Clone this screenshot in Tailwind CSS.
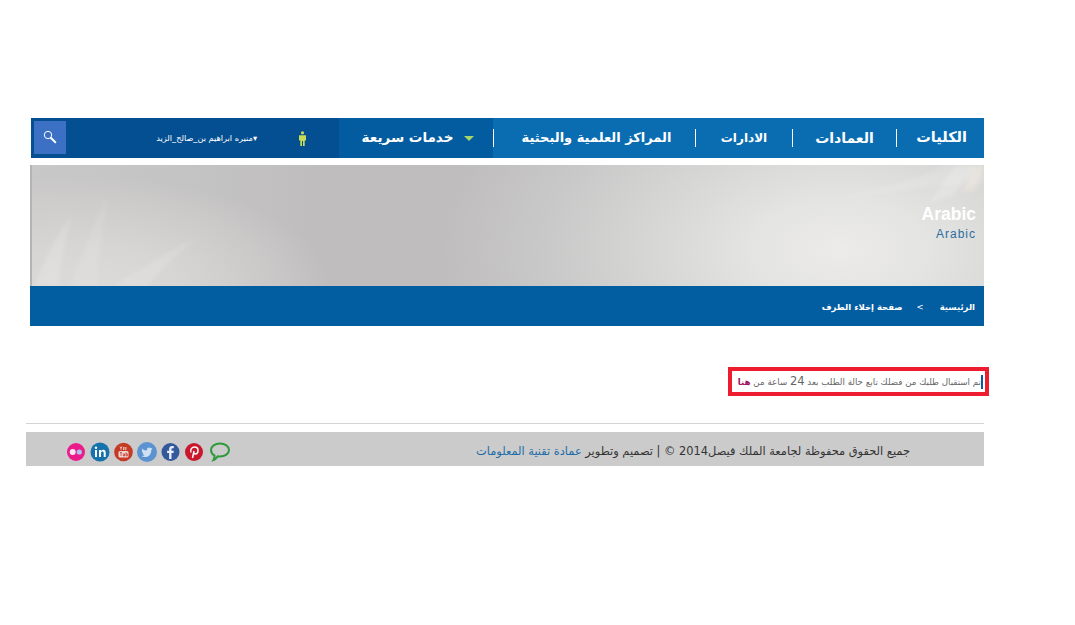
<!DOCTYPE html>
<html lang="ar">
<head>
<meta charset="utf-8">
<script src="https://cdn.jsdelivr.net/npm/@tailwindcss/browser@4"></script>
</head>
<body class="bg-white font-['DejaVu_Sans',sans-serif] w-[1075px] h-[625px] overflow-hidden">
<div class="pt-[118px] w-[1075px]">
  <!-- nav -->
  <nav class="ml-[31px] w-[953px] h-[40px] flex items-stretch bg-[#0a6db2]" dir="ltr">
    <div class="w-[308px] flex items-center bg-[#034f92] pl-[3px]">
      <div class="w-[32px] h-[33px] mb-[2px] bg-[#3b70c4] flex items-center justify-center">
        <svg width="14" height="14" viewBox="0 0 14 14" fill="none"><circle cx="5" cy="5" r="3.700" stroke="#fff" stroke-width="1"/><path d="M8 8L12.300 12.300" stroke="#fff" stroke-width="2" stroke-linecap="round"/></svg>
      </div>
      <div class="w-[192px] ml-[-1px] flex justify-end">
        <span dir="rtl" class="text-[8.200px] text-white whitespace-nowrap">▾منيره ابراهيم بن_صالح_الزيد</span>
      </div>
      <div class="ml-[39px] w-[12px] flex justify-center">
        <svg width="9" height="15" viewBox="0 0 9 15"><circle cx="4.500" cy="1.800" r="1.600" fill="#c6dc55"/><path d="M1 4.200h7v5.300H6.700V15H5V10H4v5H2.300V9.500H1z" fill="#c6dc55"/></svg>
      </div>
    </div>
    <div class="w-[154px] bg-[#035c9f] flex items-center justify-center gap-[11px] pl-[4px]">
      <span dir="rtl" class="text-[13.500px] font-bold text-white whitespace-nowrap mb-[1px]">خدمات سريعة</span>
      <span class="w-0 h-0 border-x-[5px] border-x-transparent border-t-[5px] border-t-[#a9d468] mt-[1px]"></span>
    </div>
    <div dir="rtl" class="flex-1 flex items-center font-bold text-white whitespace-nowrap">
      <a class="w-[87px] pr-[17px] text-[14.500px]">الكليات</a>
      <i class="w-px h-[18px] bg-white"></i>
      <a class="w-[103px] text-center text-[14px]">العمادات</a>
      <i class="w-px h-[18px] bg-white"></i>
      <a class="w-[96px] text-center text-[12px]">الادارات</a>
      <i class="w-px h-[18px] bg-white"></i>
      <a class="w-[201px] text-center text-[13px] pl-[4px]">المراكز العلمية والبحثية</a>
      <i class="w-px h-[18px] bg-white"></i>
    </div>
  </nav>

  <!-- banner -->
  <div class="relative mt-[7px] ml-[30px] w-[954px] h-[121px] overflow-hidden bg-[radial-gradient(ellipse_400px_230px_at_810px_85px,#ecebea_0%,#e4e4e3_22%,#d6d6d5_48%,#c9c8c8_75%,#bfbdbe00_100%),radial-gradient(ellipse_240px_110px_at_60px_121px,#e6e4e0b0_0%,#d8d6d4_35%,#bfbdbe00_100%),linear-gradient(90deg,#c9c8c8_0%,#c4c3c3_18%,#bfbdbe_30%,#bfbdbe_60%,#c6c5c5_100%)]" dir="rtl">
    <svg class="absolute inset-0 blur-[2px]" width="954" height="121" viewBox="0 0 954 121" fill="none">
      <path d="M4 121C14 95 26 70 42 50C34 80 30 105 30 121z" fill="#fff" opacity=".16"/>
      <path d="M40 121C52 90 62 60 78 30C72 70 68 100 68 121z" fill="#fff" opacity=".1"/>
      <path d="M82 121C110 105 140 85 175 68C150 85 130 105 118 121z" fill="#fff" opacity=".14"/>
      <path d="M770 40C840 28 885 15 915 0H954V18C900 20 830 30 770 40z" fill="#fff" opacity=".14"/>
      <path d="M926 0C915 15 905 28 900 38L925 30L945 0z" fill="#fff" opacity=".2"/>
      <path d="M946 25L954 5V0H942L932 28z" fill="#f3eadf" opacity=".45"/>
    </svg>
    <div class="absolute left-0 top-0 w-[2px] h-full bg-[#b4b4b4]"></div>
    <div class="relative pr-[8px] pt-[38px] text-right" dir="ltr">
      <p class="text-[17.500px] leading-[22px] font-bold text-white font-['Liberation_Sans',sans-serif]">Arabic</p>
      <p class="text-[12px] leading-[18px] tracking-[1px] text-[#2d6d9e] font-['Liberation_Sans',sans-serif]">Arabic</p>
    </div>
  </div>

  <!-- breadcrumb -->
  <div dir="rtl" class="ml-[30px] w-[954px] h-[40px] bg-[#035da1] flex items-center pt-[2px] pr-[9px] text-[8.500px] font-bold text-white whitespace-nowrap">
    <span>الرئيسية</span>
    <span class="mr-[16px] ml-[14px] font-normal">&gt;</span>
    <span>صفحة إخلاء الطرف</span>
  </div>

  <!-- message -->
  <div class="mt-[41px] ml-[728px] w-[261px] h-[29px] border-[4px] border-[#ed1c2e] bg-white flex items-center justify-end pr-[2px]">
    <p dir="rtl" class="text-[8.700px] text-[#666] whitespace-nowrap leading-[13px] border-r-2 border-[#0a5aa0]">تم استقبال طلبك من فضلك تابع حالة الطلب بعد <span class="text-[11.500px]">24</span> ساعة من <b class="text-[#a01060]">هنا</b></p>
  </div>

  <!-- footer -->
  <div class="mt-[27px] ml-[26px] w-[958px] border-t border-[#d4d4d4] pt-[8px]">
    <footer class="h-[34px] bg-[#cbcbcb] flex items-center justify-between pt-[5px] pl-[40px] pr-[74px]" dir="ltr">
      <div class="flex items-center gap-[4px]">
        <svg width="20" height="20" viewBox="0 0 20 20"><circle cx="10" cy="10" r="9" fill="#ea1c8c"/><circle cx="6.700" cy="10" r="3" fill="#fff" fill-opacity=".9"/><circle cx="13.300" cy="10" r="2.600" fill="#a9c6f0"/></svg>
        <svg width="20" height="20" viewBox="0 0 20 20"><circle cx="10" cy="10" r="9.500" fill="#1572ac"/><rect x="5" y="8" width="2" height="7" fill="#fff"/><circle cx="6" cy="5.800" r="1.200" fill="#fff"/><path d="M9 8h2v1c.6-.8 1.300-1.200 2.300-1.200 1.700 0 2.400 1.100 2.400 2.900V15h-2v-4c0-1-.4-1.500-1.200-1.500S11 10 11 11v4H9z" fill="#fff"/></svg>
        <svg width="19" height="20" viewBox="0 0 19 20"><circle cx="9.500" cy="10" r="9.300" fill="#c43a26"/><rect x="4.500" y="9" width="10" height="6.500" rx="1.500" fill="#f0d8d2"/><path d="M6 4.500l1 2v1.500M8 4.500l-1 2M9.500 5v3M11 5v2.500c0 .6.800.6 1 0V5" stroke="#f0d8d2" stroke-width=".8" fill="none"/><path d="M6 10.500h2M7 10.500V14M9.300 11.500V14h1.200V11.500M12 10.500V14h1.300v-2.200H12" stroke="#c43a26" stroke-width=".8" fill="none"/></svg>
        <svg width="20" height="20" viewBox="0 0 20 20"><circle cx="10" cy="10" r="10" fill="#5b93d1"/><path d="M15.500 6.500c-.4.200-.9.300-1.300.400.500-.3.800-.7 1-1.200-.4.300-.9.400-1.400.5a2.300 2.300 0 0 0-3.900 2.100C8 8.700 6.300 7.800 5.200 6.400c-.6 1-.3 2.300.7 3-.4 0-.7-.1-1-.3 0 1.100.8 2 1.800 2.300-.3.100-.7.100-1 0 .3.900 1.100 1.600 2.100 1.600-1 .8-2.200 1.100-3.400 1 3.500 2.200 9.900.9 9.900-6.100.5-.3.900-.8 1.200-1.300z" fill="#cfe0f3"/></svg>
        <svg width="19" height="20" viewBox="0 0 19 20"><circle cx="9.500" cy="10" r="9" fill="#34589c"/><path d="M10.500 17v-6h2l.3-2.300h-2.300V7.300c0-.7.200-1.100 1.100-1.100h1.200V4.100c-.6-.1-1.200-.1-1.700-.1-1.800 0-3 1.100-3 3v1.700h-2V11h2v6z" fill="#e8edf6"/></svg>
        <svg width="20" height="20" viewBox="0 0 20 20"><circle cx="10" cy="10" r="9" fill="#c9182c"/><path d="M8.500 16l1.500-7M7 10.500C5.800 7.500 8 5 10.500 5c2.300 0 3.500 1.500 3.500 3.300 0 2.200-1.300 3.700-2.800 3.700-.8 0-1.400-.5-1.500-1.100" stroke="#fff" stroke-width="1.500" fill="none"/></svg>
        <svg class="ml-[1px]" width="22" height="20" viewBox="0 0 22 20" fill="none"><path d="M11 1.500c5 0 9 2.800 9 6.500s-4 6.500-9 6.500c-.8 0-1.600-.1-2.300-.2C7.500 16 6 17.500 4.500 18c.7-1.300 1-2.700 1-4.500C3.200 12.300 2 10.300 2 8c0-3.700 4-6.500 9-6.500z" stroke="#2f9a3c" stroke-width="2"/></svg>
      </div>
      <p dir="rtl" class="text-[11.400px] text-[#333] whitespace-nowrap">جميع الحقوق محفوظة لجامعة الملك فيصل2014 © | تصميم وتطوير <a class="text-[#1c6ca8]">عمادة تقنية المعلومات</a></p>
    </footer>
  </div>
</div>
</body>
</html>
